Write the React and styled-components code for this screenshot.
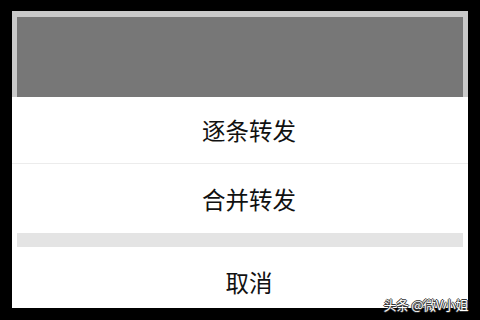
import React from "react";
import styled, { createGlobalStyle } from "styled-components";

const Global = createGlobalStyle`
  html, body { margin: 0; padding: 0; background: #000; }
  body { font-family: "Noto Sans CJK SC", "Noto Sans", sans-serif; }
`;

const Page = styled.div`
  position: relative;
  width: 480px;
  height: 320px;
  box-sizing: border-box;
  padding: 11px 12px 12px 12px;
  background: #000;
  overflow: hidden;
`;

const Frame = styled.div`
  height: 297px;
  background: #fff;
  display: flex;
  flex-direction: column;
  overflow: hidden;
`;

const Overlay = styled.div`
  flex: 0 0 86px;
  box-sizing: border-box;
  background: #777777;
  border-top: 6px solid #c9c9c9;
  border-left: 5px solid #c9c9c9;
  border-right: 5px solid #c9c9c9;
`;

const Item = styled.div`
  flex: 0 0 ${(p) => p.$h}px;
  box-sizing: border-box;
  display: flex;
  align-items: center;
  justify-content: center;
  padding-left: 18px;
  font-size: 23.5px;
  color: #111;
  background: #fff;
  border-bottom: ${(p) => (p.$divider ? "1px solid #ececec" : "none")};
`;

const Gap = styled.div`
  flex: 0 0 14px;
  margin: 0 5px;
  background: #e4e4e4;
`;

const Watermark = styled.div`
  position: absolute;
  right: 12px;
  bottom: 8px;
  font-size: 13px;
  line-height: 14px;
  letter-spacing: -0.4px;
  color: #fff;
  text-shadow: 1px 0 0 #333, -1px 0 0 #333, 0 1px 0 #333, 0 -1px 0 #333;
  white-space: nowrap;
`;

export default function App() {
  return (
    <>
      <Global />
      <Page>
        <Frame>
          <Overlay />
          <Item $h={67} $divider>逐条转发</Item>
          <Item $h={69}>合并转发</Item>
          <Gap />
          <Item $h={70}>取消</Item>
        </Frame>
        <Watermark>头条 @微V小姐</Watermark>
      </Page>
    </>
  );
}
